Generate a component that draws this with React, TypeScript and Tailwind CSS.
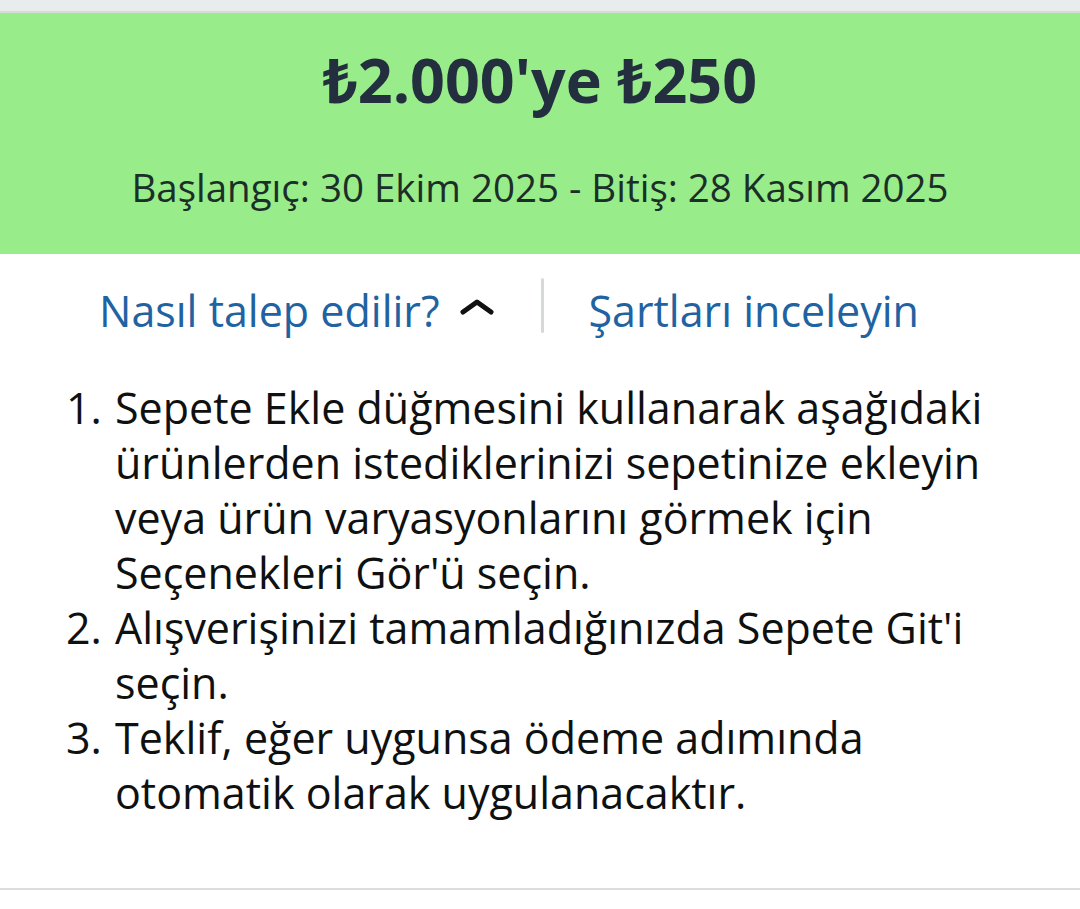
import React from "react";

const items: string[] = [
  "Sepete Ekle düğmesini kullanarak aşağıdaki ürünlerden istediklerinizi sepetinize ekleyin veya ürün varyasyonlarını görmek için Seçenekleri Gör'ü seçin.",
  "Alışverişinizi tamamladığınızda Sepete Git'i seçin.",
  "Teklif, eğer uygunsa ödeme adımında otomatik olarak uygulanacaktır.",
];

export default function App() {
  return (
    <div
      className="w-[1080px] h-[909px] bg-white overflow-hidden flex flex-col"
      style={{ fontFamily: '"Open Sans", "Noto Sans", sans-serif' }}
    >
      <div className="h-[11px] bg-[#e9eced]" />
      <div className="h-[2px] bg-[#d3ddd5]" />
      <div className="h-[241px] bg-[#98ec8a] flex flex-col items-center">
        <div className="mt-[31px] text-[61px] leading-[72px] font-bold text-[#232f3e]">
          ₺2.000'ye ₺250
        </div>
        <div className="mt-[47px] text-[38.5px] leading-[48px] text-[#1b2e28]">
          Başlangıç: 30 Ekim 2025 - Bitiş: 28 Kasım 2025
        </div>
      </div>
      <div className="mt-[23px] h-[56px] flex items-center pl-[99px]">
        <span className="mt-[12px] text-[43px] leading-[56px] text-[#2162a1] whitespace-nowrap">
          Nasıl talep edilir?
        </span>
        <svg className="ml-[19px] mt-[4px]" width="36" height="18" viewBox="0 0 36 18" fill="none" stroke="#111" strokeWidth="5" strokeLinecap="round" strokeLinejoin="round">
          <path d="M4 14L18 4L32 14" />
        </svg>
        <div className="ml-[46px] w-[3px] h-[55px] bg-[#d5d9d9] rounded-full" />
        <span className="ml-[45px] mt-[12px] text-[43px] leading-[56px] text-[#2162a1] whitespace-nowrap">
          Şartları inceleyin
        </span>
      </div>
      <ol className="mt-[47px] ml-[66px] mr-[60px] flex flex-col text-[43px] leading-[55px] text-[#0f1111]">
        {items.map((t, i) => (
          <li key={i} className="flex">
            <span className="w-[49px] shrink-0">{i + 1}.</span>
            <span>{t}</span>
          </li>
        ))}
      </ol>
      <div className="flex-1" />
      <div className="h-[2px] bg-[#dddddd] mb-[19px]" />
    </div>
  );
}
